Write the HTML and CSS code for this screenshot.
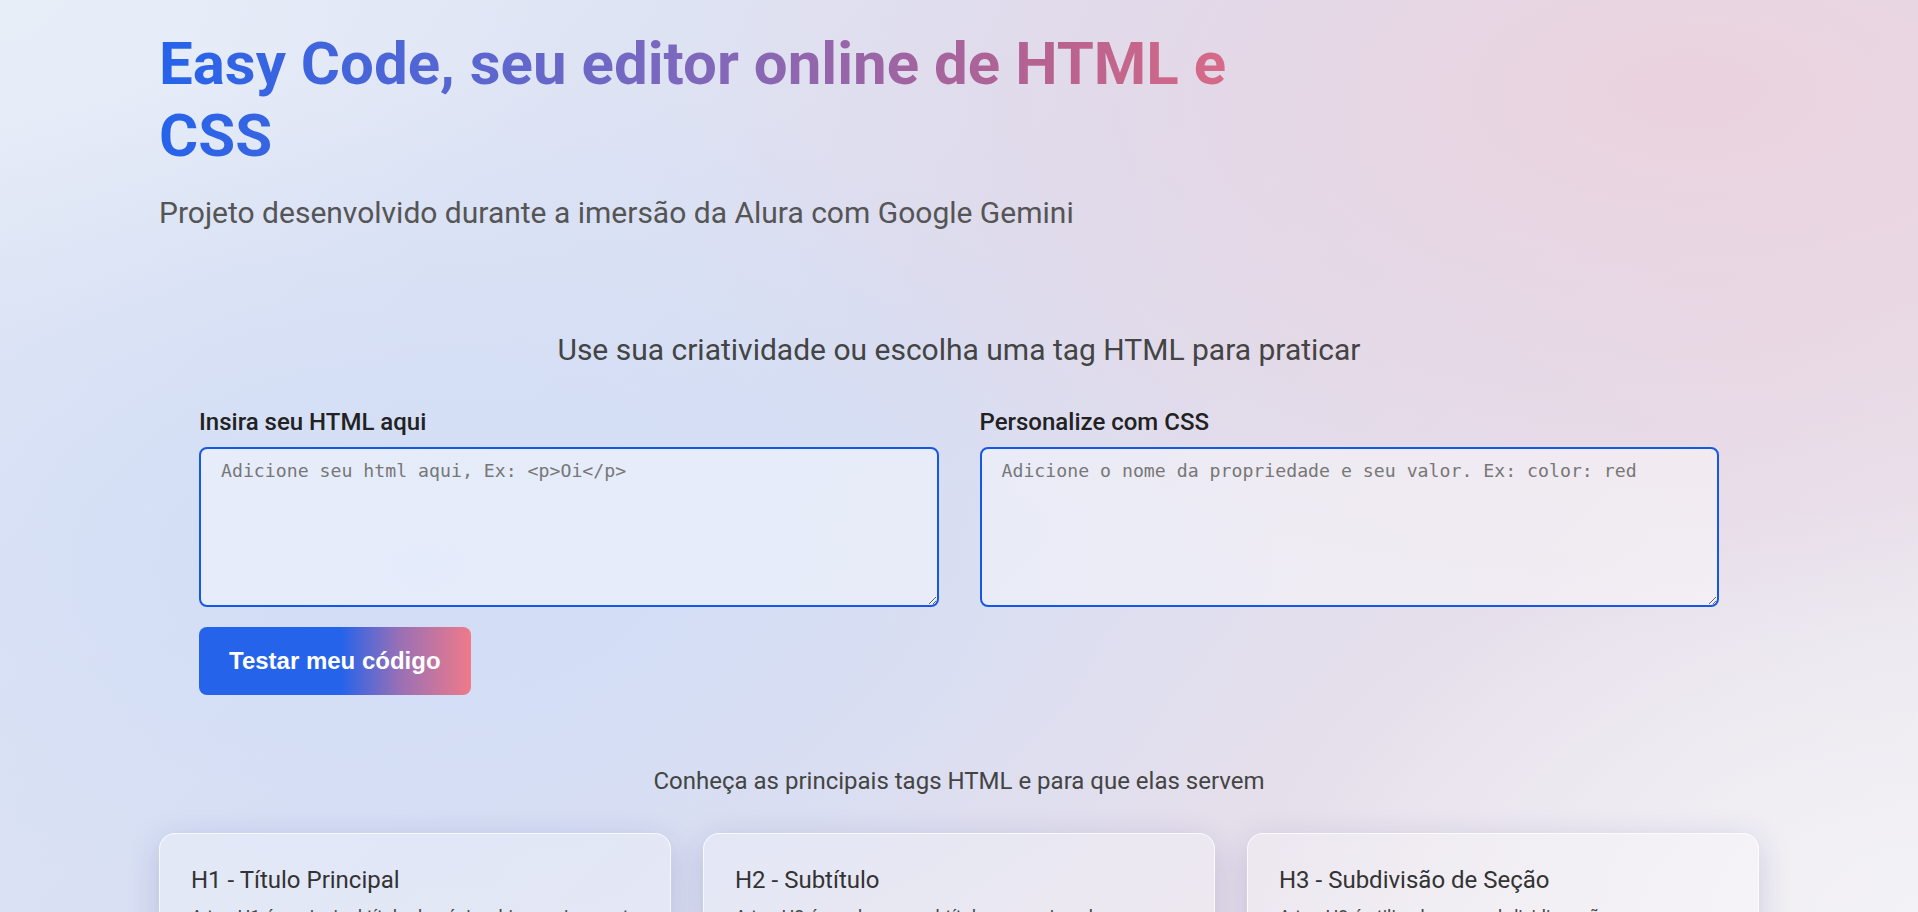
FILE: index.html
```html
<!DOCTYPE html>
<html lang="pt-BR">
<head>
<meta charset="utf-8">
<title>Easy Code</title>
<link rel="stylesheet" href="styles.css">
</head>
<body>
<div class="page">
  <header class="hero">
    <h1 class="hero-title">Easy Code, seu editor online de HTML e CSS</h1>
    <p class="hero-sub">Projeto desenvolvido durante a imersão da Alura com Google Gemini</p>
  </header>
  <main>
    <section class="editor">
      <h2 class="editor-title">Use sua criatividade ou escolha uma tag HTML para praticar</h2>
      <div class="editor-grid">
        <div class="field">
          <label class="field-label" for="html">Insira seu HTML aqui</label>
          <textarea id="html" class="field-input" placeholder="Adicione seu html aqui, Ex: <p>Oi</p>"></textarea>
        </div>
        <div class="field">
          <label class="field-label" for="css">Personalize com CSS</label>
          <textarea id="css" class="field-input" placeholder="Adicione o nome da propriedade e seu valor. Ex: color: red"></textarea>
        </div>
      </div>
      <button class="btn" type="button">Testar meu código</button>
    </section>
    <section class="tags">
      <h2 class="tags-title">Conheça as principais tags HTML e para que elas servem</h2>
      <div class="cards">
        <article class="card">
          <h3 class="card-title">H1 - Título Principal</h3>
          <p class="card-text">A tag H1 é o principal título da página, hierarquicamente o mais importante do conteúdo.</p>
        </article>
        <article class="card">
          <h3 class="card-title">H2 - Subtítulo</h3>
          <p class="card-text">A tag H2 é usada para subtítulos, organizando as seções principais do conteúdo.</p>
        </article>
        <article class="card">
          <h3 class="card-title">H3 - Subdivisão de Seção</h3>
          <p class="card-text">A tag H3 é utilizada para subdividir seções intermediárias do conteúdo.</p>
        </article>
      </div>
    </section>
  </main>
</div>
</body>
</html>
```
FILE: styles.css
```css
html {
  scrollbar-width: none;
}

body {
  margin: 0;
  min-height: 100vh;
  font-family: Roboto, "Noto Sans", sans-serif;
  color: #222;
  background:
    radial-gradient(ellipse 55% 60% at 88% 10%, rgba(235, 210, 222, 0.95) 0%, rgba(235, 210, 222, 0) 100%),
    radial-gradient(ellipse 45% 55% at 22% 62%, rgba(209, 221, 246, 1) 0%, rgba(209, 221, 246, 0) 100%),
    radial-gradient(ellipse 35% 45% at 100% 100%, rgba(243, 242, 246, 1) 0%, rgba(243, 242, 246, 0) 100%),
    radial-gradient(ellipse 30% 40% at 0% 0%, rgba(232, 238, 248, 1) 0%, rgba(232, 238, 248, 0) 100%),
    linear-gradient(135deg, #e2e9f6 0%, #dadff2 45%, #e6dfeb 75%, #ece9f0 100%);
  background-attachment: fixed;
}

.page {
  max-width: 1600px;
  margin: 0 auto;
}

.hero {
  padding-top: 28px;
}

.hero-title {
  margin: 0;
  max-width: 1120px;
  font-size: 60px;
  line-height: 72px;
  font-weight: 700;
  background: linear-gradient(90deg, #2563eb 0%, #7a68bf 45%, #b8628f 80%, #e06d86 100%);
  -webkit-background-clip: text;
  background-clip: text;
  color: transparent;
}

.hero-sub {
  margin: 23px 0 0;
  font-size: 30px;
  line-height: 35px;
  color: #555;
}

.editor {
  padding: 0 40px;
}

.editor-title {
  margin: 102px 0 0;
  text-align: center;
  font-size: 30px;
  line-height: 35px;
  font-weight: 400;
  color: #444;
}

.editor-grid {
  display: grid;
  grid-template-columns: 1fr 1fr;
  gap: 41px;
  margin-top: 41px;
}

.field {
  display: flex;
  flex-direction: column;
}

.field-label {
  font-size: 24px;
  line-height: 28px;
  font-weight: 500;
  color: #222;
  margin-bottom: 11px;
}

.field-input {
  box-sizing: border-box;
  height: 160px;
  padding: 11px 20px;
  border: 2px solid #1558e6;
  border-radius: 8px;
  background: rgba(255, 255, 255, 0.42);
  font-family: "DejaVu Sans Mono", monospace;
  font-size: 18.2px;
  color: #333;
  resize: vertical;
  outline: none;
}

.field-input::placeholder {
  color: #777;
}

.btn {
  display: block;
  margin-top: 20px;
  padding: 20px 30px;
  border: none;
  border-radius: 8px;
  font-family: "Liberation Sans", Arial, sans-serif;
  font-size: 24px;
  line-height: 28px;
  font-weight: 700;
  color: #fff;
  background: linear-gradient(90deg, #2563eb 0%, #2563eb 52%, #9a70b5 74%, #ef7a8a 100%);
  cursor: pointer;
}

.tags-title {
  margin: 72px 0 0;
  text-align: center;
  font-size: 24px;
  line-height: 28px;
  font-weight: 400;
  color: #444;
}

.cards {
  display: grid;
  grid-template-columns: repeat(3, 1fr);
  gap: 32px;
  margin-top: 38px;
  padding-bottom: 60px;
}

.card {
  padding: 32px 31px;
  border: 1px solid rgba(255, 255, 255, 0.75);
  border-radius: 16px;
  background: rgba(255, 255, 255, 0.28);
  box-shadow: 0 8px 32px rgba(31, 38, 135, 0.18);
}

.card-title {
  margin: 0;
  font-size: 24px;
  line-height: 28px;
  font-weight: 400;
  color: #333;
}

.card-text {
  margin: 9px 0 0;
  font-size: 18px;
  line-height: 28px;
  color: #444;
}
```
